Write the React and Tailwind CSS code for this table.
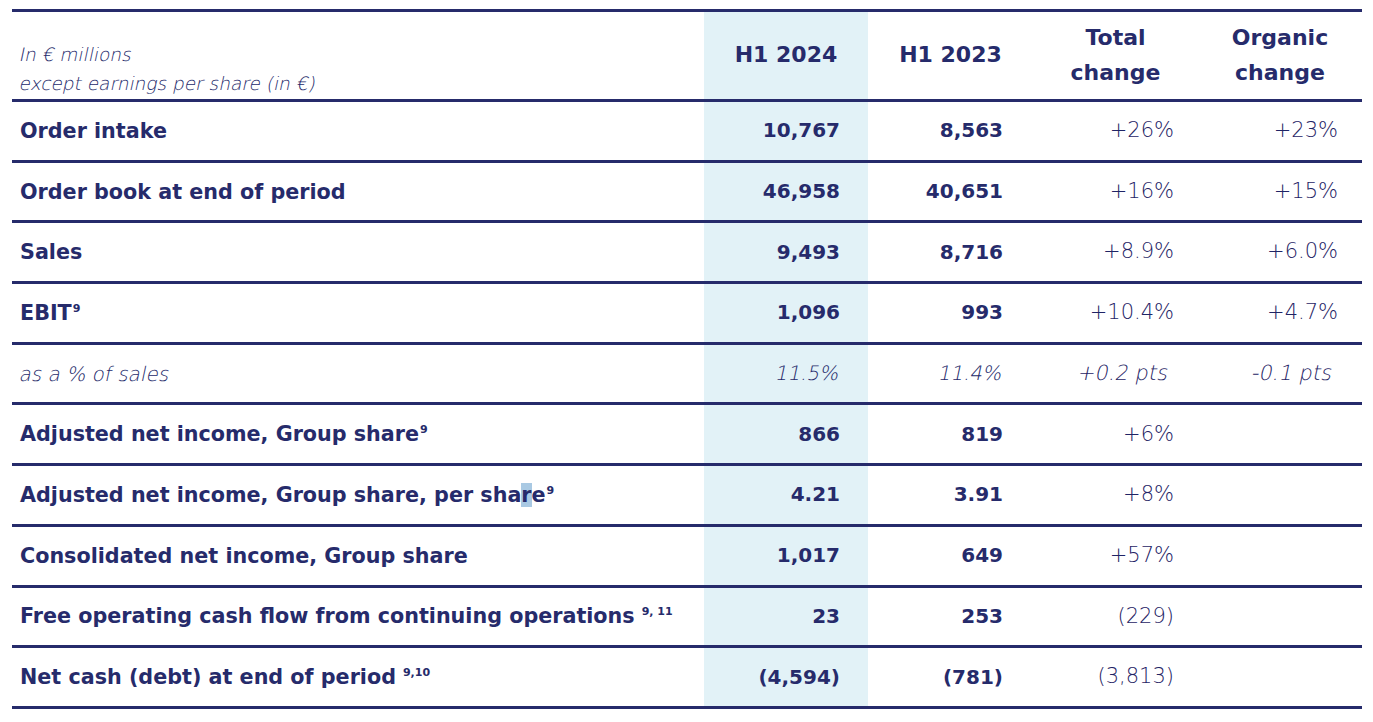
const rows = [
  { label: 'Order intake', a: '10,767', b: '8,563', t: '+26%', o: '+23%' },
  { label: 'Order book at end of period', a: '46,958', b: '40,651', t: '+16%', o: '+15%' },
  { label: 'Sales', a: '9,493', b: '8,716', t: '+8.9%', o: '+6.0%' },
  { label: 'EBIT', sup: '9', a: '1,096', b: '993', t: '+10.4%', o: '+4.7%' },
  { label: 'as a % of sales', italic: true, a: '11.5%', b: '11.4%', t: '+0.2 pts', o: '-0.1 pts' },
  { label: 'Adjusted net income, Group share', sup: '9', a: '866', b: '819', t: '+6%', o: '' },
  { label: 'per', a: '4.21', b: '3.91', t: '+8%', o: '' },
  { label: 'Consolidated net income, Group share', a: '1,017', b: '649', t: '+57%', o: '' },
  { label: 'Free operating cash flow from continuing operations', sup: '9, 11', gap: true, a: '23', b: '253', t: '(229)', o: '' },
  { label: 'Net cash (debt) at end of period', sup: '9,10', gap: true, a: '(4,594)', b: '(781)', t: '(3,813)', o: '' },
]

const cols = 'grid grid-cols-[692px_164px_165px_165px_164px]'

// thin italic: the light face has no oblique, so slant it by hand
function Slant({ children }) {
  return <span className="inline-block -skew-x-12 font-extralight">{children}</span>
}

function Sup({ children, gap }) {
  return (
    <sup className={'text-[11px] font-bold -top-[8px] ' + (gap ? 'ml-[7px]' : 'ml-[1px]')}>{children}</sup>
  )
}

function Label({ r }) {
  if (r.italic) return <Slant>{r.label}</Slant>
  if (r.label === 'per') {
    return (
      <span>
        Adjusted net income, Group share, per sha<span className="bg-[#a9c9e3]">r</span>e<Sup>9</Sup>
      </span>
    )
  }
  return (
    <span>
      {r.label}
      {r.sup && <Sup gap={r.gap}>{r.sup}</Sup>}
    </span>
  )
}

export default function App() {
  return (
    <div className="w-[1373px] h-[722px] bg-white pt-[9px] pl-[12px] text-[#262b6b]" style={{ fontFamily: '"DejaVu Sans", sans-serif' }}>
      <div className="w-[1350px] border-t-[3px] border-[#262b6b]">
        {/* header */}
        <div className={cols + ' h-[90px] border-b-[3px] border-[#262b6b]'}>
          <div className="pl-[8px] pt-[28px] text-[18.5px] leading-[29px] text-[#262b6b]">
            <div><Slant>In € millions</Slant></div>
            <div><Slant>except earnings per share (in €)</Slant></div>
          </div>
          <div className="bg-[#e2f2f7] flex items-center justify-center font-bold text-[22px] pb-[2px]">H1 2024</div>
          <div className="flex items-center justify-center font-bold text-[22px] pb-[2px]">H1 2023</div>
          <div className="flex flex-col items-center justify-center font-bold text-[22px] leading-[35px] pb-[2px]">
            <span>Total</span>
            <span>change</span>
          </div>
          <div className="flex flex-col items-center justify-center font-bold text-[22px] leading-[35px] pb-[2px]">
            <span>Organic</span>
            <span>change</span>
          </div>
        </div>

        {rows.map((r, i) => (
          <div key={i} className={cols + ' h-[60.7px] border-b-[3px] border-[#262b6b]'}>
            <div className={'pl-[8px] pt-[1px] flex items-center ' + (r.italic ? 'text-[20px]' : 'text-[20.7px] font-bold')}>
              <Label r={r} />
            </div>
            <div className="bg-[#e2f2f7] flex items-center justify-end pr-[28px] pb-[1px] text-[20px] font-bold">
              {r.italic ? <Slant>{r.a}</Slant> : r.a}
            </div>
            <div className="flex items-center justify-end pr-[30px] pb-[1px] text-[20px] font-bold">
              {r.italic ? <Slant>{r.b}</Slant> : r.b}
            </div>
            <div className={'flex items-center justify-end font-extralight text-[21px] text-[#1f2465] ' + (r.italic ? 'pr-[30px]' : 'pr-[24px]')}>
              {r.italic ? <Slant>{r.t}</Slant> : r.t}
            </div>
            <div className={'flex items-center justify-end font-extralight text-[21px] text-[#1f2465] ' + (r.italic ? 'pr-[30px]' : 'pr-[24px]')}>
              {r.italic ? <Slant>{r.o}</Slant> : r.o}
            </div>
          </div>
        ))}
      </div>
    </div>
  )
}
